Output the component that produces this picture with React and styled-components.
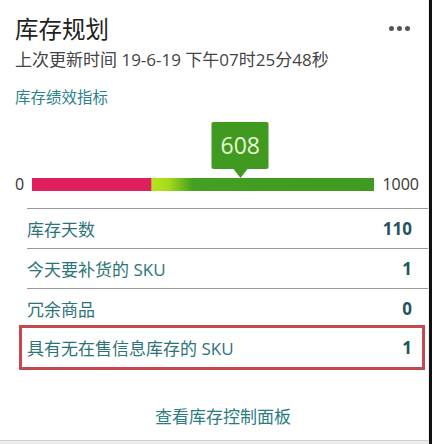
import React from "react";
import styled, { createGlobalStyle } from "styled-components";

const Global = createGlobalStyle`
  html, body { margin: 0; padding: 0; background: #111; }
  body { font-family: "Open Sans", "Noto Sans CJK SC", sans-serif; }
  * { box-sizing: border-box; }
`;

const Card = styled.div`
  width: 429px;
  height: 441px;
  background: #fff;
  border-right: 1px solid #ededed;
  border-bottom: 1px solid #cfcfcf;
  display: flex;
  flex-direction: column;
  overflow: hidden;
`;

const BottomStrip = styled.div`
  width: 429px;
  height: 3px;
  background: #ececec;
`;

const Header = styled.div`
  padding: 14px 16px 0 15px;
  display: flex;
  justify-content: space-between;
  align-items: flex-start;
`;

const Title = styled.h1`
  margin: 0;
  font-size: 23.5px;
  line-height: 30px;
  font-weight: 400;
  color: #222;
`;

const More = styled.div`
  display: flex;
  gap: 3px;
  margin-top: 12px;
  margin-right: 2px;
`;

const Dot = styled.span`
  width: 5px;
  height: 5px;
  border-radius: 50%;
  background: #555;
`;

const Subtitle = styled.div`
  margin: 4px 0 0 15px;
  font-size: 17px;
  line-height: 24px;
  color: #444;
`;

const SectionLink = styled.div`
  margin: 14px 0 0 15px;
  font-size: 15.5px;
  line-height: 22px;
  color: #2b8289;
`;

const Gauge = styled.div`
  display: flex;
  align-items: center;
  margin-top: 68px;
  padding: 0 9px 0 15px;
  gap: 8px;
`;

const Tick = styled.span`
  font-size: 16px;
  line-height: 16px;
  color: #333;
`;

const Track = styled.div`
  position: relative;
  flex: 1;
  height: 13px;
  background: linear-gradient(
    to right,
    #e0205d 0%,
    #e0205d 34.8%,
    #b7e320 35%,
    #a6d91c 40%,
    #43a020 47%,
    #3f9a1f 100%
  );
`;

const Marker = styled.div`
  position: absolute;
  bottom: 22px;
  transform: translateX(-50%);
  width: 57px;
  height: 47px;
  background: #3f9a1f;
  border-radius: 2px;
  display: flex;
  align-items: center;
  justify-content: center;
  color: #eaf6d8;
  font-size: 23px;
  line-height: 1;
  &::after {
    content: "";
    position: absolute;
    left: 50%;
    bottom: -9px;
    transform: translateX(-50%);
    border-left: 7px solid transparent;
    border-right: 7px solid transparent;
    border-top: 9px solid #3f9a1f;
  }
`;

const List = styled.div`
  margin: 16px 0 0 27px;
  display: flex;
  flex-direction: column;
`;

const Row = styled.div`
  display: flex;
  justify-content: space-between;
  align-items: center;
  height: ${(p) => (p.$highlight ? "45px" : "40px")};
  border-top: ${(p) => (p.$highlight ? "3px solid #c4484c" : "1px solid #9a9a9a")};
  border: ${(p) => (p.$highlight ? "3px solid #c4484c" : undefined)};
  margin: ${(p) => (p.$highlight ? "-3px 3px 0 -8px" : "0")};
  padding: ${(p) => (p.$highlight ? "0 10px 0 5px" : "0 16px 0 0")};
`;

const Label = styled.span`
  font-size: 17px;
  color: #2d7479;
`;

const Value = styled.span`
  font-size: 17px;
  font-weight: 700;
  color: #1f5560;
`;

const Footer = styled.div`
  margin-top: 35px;
  padding-left: 18px;
  text-align: center;
  font-size: 17px;
  line-height: 24px;
  color: #2b7c82;
`;

const rows = [
  { label: "库存天数", value: "110" },
  { label: "今天要补货的 SKU", value: "1" },
  { label: "冗余商品", value: "0" },
  { label: "具有无在售信息库存的 SKU", value: "1", highlight: true },
];

export default function App() {
  const score = 608;
  return (
    <>
      <Global />
      <Card>
        <Header>
          <Title>库存规划</Title>
          <More>
            <Dot />
            <Dot />
            <Dot />
          </More>
        </Header>
        <Subtitle>上次更新时间 19-6-19 下午07时25分48秒</Subtitle>
        <SectionLink>库存绩效指标</SectionLink>
        <Gauge>
          <Tick>0</Tick>
          <Track>
            <Marker style={{ left: `${(score / 1000) * 100}%` }}>{score}</Marker>
          </Track>
          <Tick>1000</Tick>
        </Gauge>
        <List>
          {rows.map((r) => (
            <Row key={r.label} $highlight={r.highlight}>
              <Label>{r.label}</Label>
              <Value>{r.value}</Value>
            </Row>
          ))}
        </List>
        <Footer>查看库存控制面板</Footer>
      </Card>
      <BottomStrip />
    </>
  );
}
